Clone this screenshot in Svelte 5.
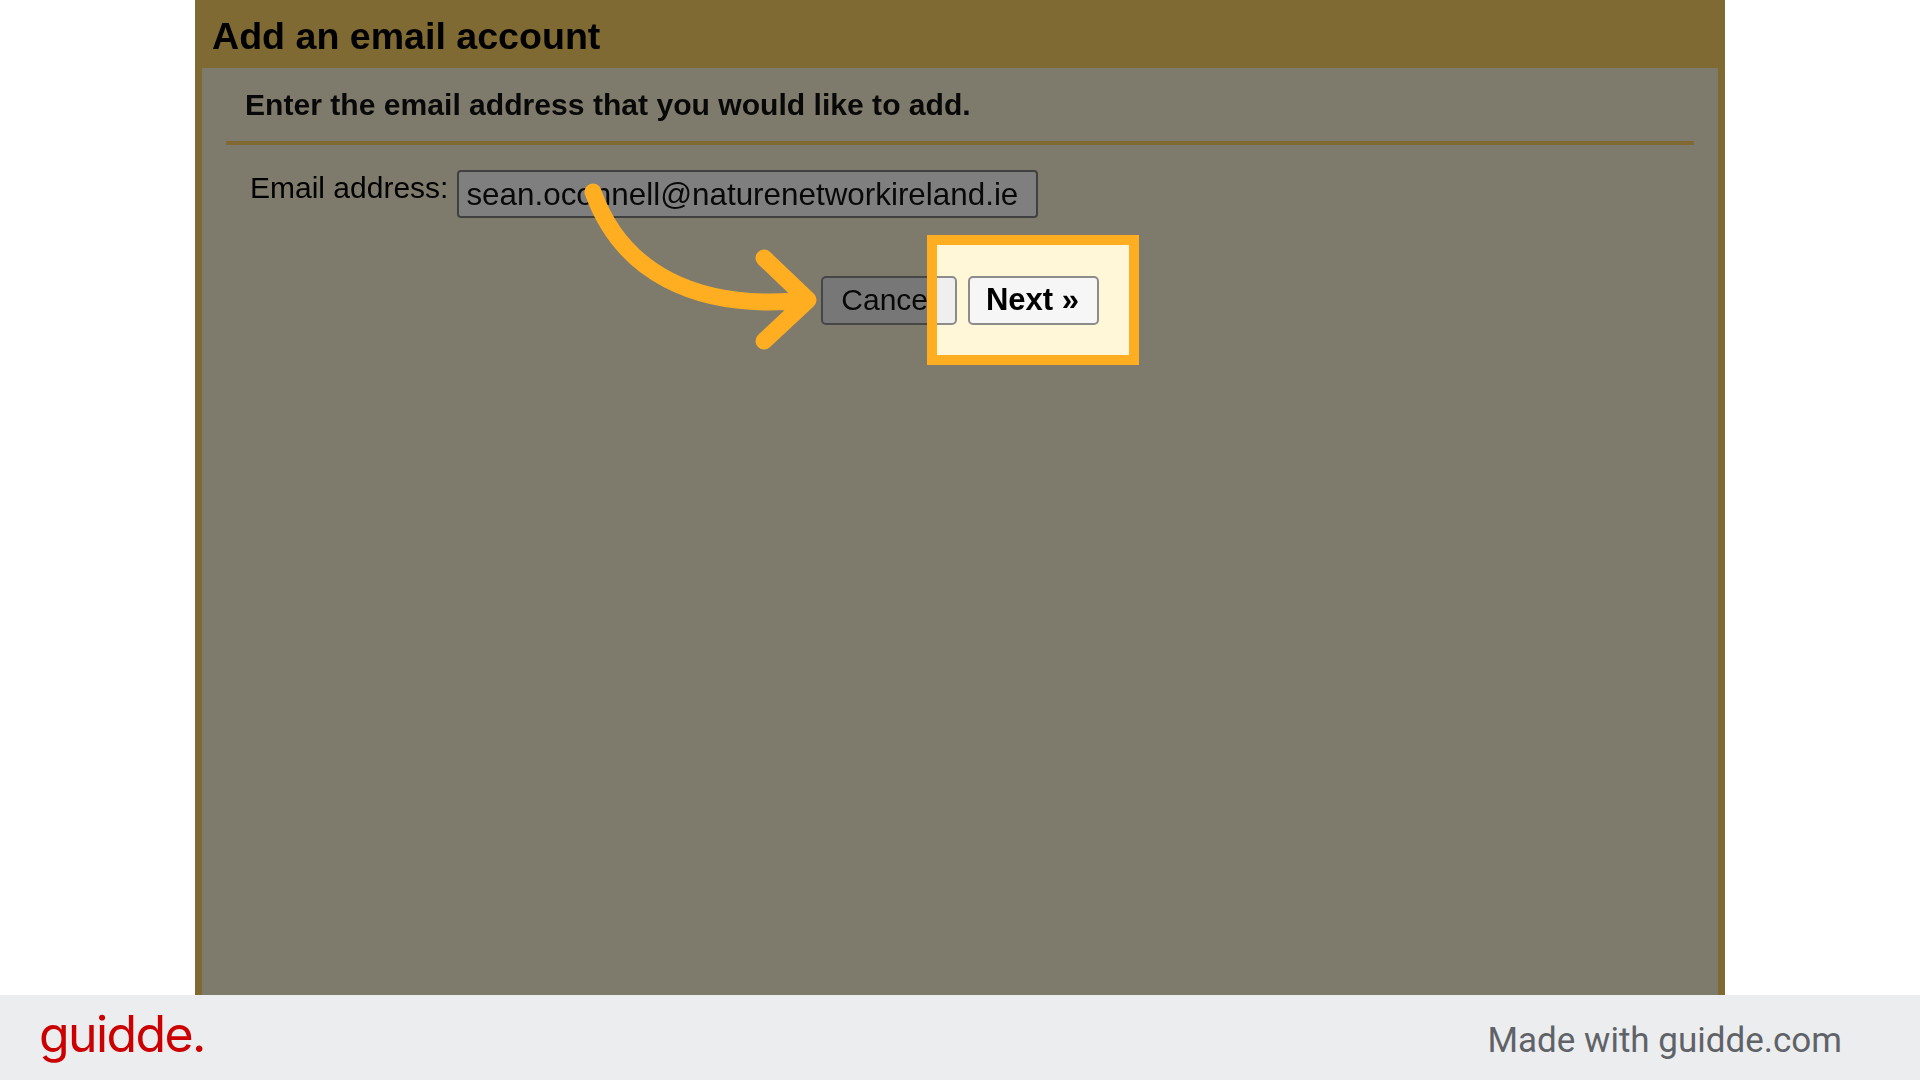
<script>
  const email = "sean.oconnell@naturenetworkireland.ie";
</script>

<div class="page">
  <main class="stage">
    <div class="panel">
      <h1>Add an email account</h1>
      <div class="body">
        <p class="lead">Enter the email address that you would like to add.</p>
        <div class="row">
          <label for="addr">Email address:</label>
          <input id="addr" type="text" value={email} />
        </div>
        <div class="actions">
          <button type="button">Cancel</button>
          <button type="button" class="next">Next »</button>
        </div>
      </div>
    </div>

    <!-- dims everything but the hole around the Next button -->
    <div class="spot"></div>

    <svg class="arrow" width="1530" height="995" viewBox="0 0 1530 995" fill="none" aria-hidden="true">
      <path d="M398 192C426 270 498 312 613 300M569 258L613 300L569 341" stroke="#ffae21" stroke-width="17" stroke-linecap="round" stroke-linejoin="round" />
    </svg>
  </main>

  <footer>
    <span class="logo">guidde.</span>
    <span class="made">Made with guidde.com</span>
  </footer>
</div>

<style>
  :global(body) {
    margin: 0;
    background: #fff;
  }
  .page {
    width: 1920px;
    height: 1080px;
    display: flex;
    flex-direction: column;
    overflow: hidden;
  }
  .stage {
    position: relative;
    width: 1530px;
    height: 995px;
    margin-left: 195px;
    overflow: hidden;
  }
  .panel {
    height: 100%;
    display: flex;
    flex-direction: column;
    box-sizing: border-box;
    border: solid #ffd466;
    border-width: 0 7px;
    background: #ffd466;
    font-family: "Liberation Sans", Arial, sans-serif;
    color: #000;
    filter: blur(0.5px);
  }
  h1 {
    margin: 0;
    height: 68px;
    display: flex;
    align-items: center;
    padding: 4px 0 0 10px;
    box-sizing: border-box;
    font-size: 37.6px;
    font-weight: 700;
  }
  .body {
    flex: 1;
    background: #fff7d8;
    padding: 0 24px;
  }
  .lead {
    margin: 0;
    height: 77px;
    box-sizing: border-box;
    padding: 19px 0 0 19px;
    border-bottom: 4px solid #ffd466;
    font-size: 30.1px;
    font-weight: 700;
    line-height: 35px;
    color: #111;
  }
  .row {
    display: flex;
    gap: 9px;
    margin-top: 25px;
    padding-left: 24px;
  }
  label {
    font-size: 30px;
    line-height: 35px;
  }
  input {
    width: 581px;
    height: 48px;
    box-sizing: border-box;
    padding: 2px 7px 0;
    margin: 0;
    border: 2px solid #808080;
    border-radius: 4px;
    background: #fff;
    font: 31.4px "Liberation Sans", Arial, sans-serif;
    color: #111;
  }
  .actions {
    display: flex;
    gap: 11px;
    margin-top: 58px;
    padding-left: 595px;
  }
  button {
    height: 49px;
    width: 136px;
    box-sizing: border-box;
    padding: 0 2px 2px 0;
    border: 2px solid #8c8c8c;
    border-radius: 5px;
    background: #efefef;
    font: 30px "Liberation Sans", Arial, sans-serif;
    color: #111;
  }
  .next {
    width: 131px;
    background: #f6f6f6;
    font-size: 31px;
    font-weight: 700;
    color: #000;
  }
  .spot {
    position: absolute;
    left: 732px;
    top: 235px;
    width: 212px;
    height: 130px;
    box-sizing: border-box;
    border: 10px solid #ffae21;
    box-shadow: 0 0 0 2000px rgba(0, 0, 0, 0.5);
  }
  .arrow {
    position: absolute;
    left: 0;
    top: 0;
  }
  footer {
    flex: 1;
    display: flex;
    align-items: center;
    justify-content: space-between;
    padding: 0 78px 0 39px;
    background: #ecedef;
  }
  .logo {
    font: 400 50px Inter, sans-serif;
    letter-spacing: -1.6px;
    color: #cc0000;
    margin-top: -8px;
  }
  .made {
    font: 35px Roboto, sans-serif;
    color: #5f6368;
    margin-top: 6px;
  }
</style>
